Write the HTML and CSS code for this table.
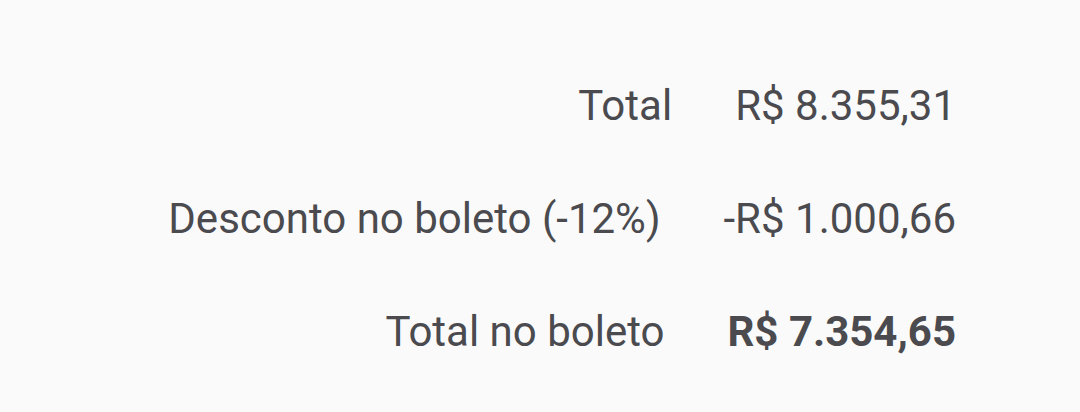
FILE: index.html
```html
<!DOCTYPE html>
<html lang="pt-BR">
<head>
<meta charset="utf-8">
<link rel="stylesheet" href="styles.css">
</head>
<body>
<div class="summary">
  <div class="row">
    <span class="label">Total</span>
    <span class="value">R$ 8.355,31</span>
  </div>
  <div class="row">
    <span class="label">Desconto no boleto (-12%)</span>
    <span class="value">-R$ 1.000,66</span>
  </div>
  <div class="row">
    <span class="label">Total no boleto</span>
    <span class="value strong">R$ 7.354,65</span>
  </div>
</div>
</body>
</html>
```

FILE: styles.css
```css
html, body {
  margin: 0;
  padding: 0;
  background: #fafafa;
}
body {
  width: 1080px;
  height: 412px;
  overflow: hidden;
  font-family: Roboto, "Noto Sans", sans-serif;
  color: #4a4a4f;
}
.summary {
  display: flex;
  flex-direction: column;
  gap: 64px;
  padding: 81px 124px 0 0;
  font-size: 42px;
  line-height: 49px;
}
.row {
  display: flex;
  justify-content: flex-end;
  gap: 63px;
}
.value {
  text-align: right;
}
.strong {
  font-weight: 700;
}
```
